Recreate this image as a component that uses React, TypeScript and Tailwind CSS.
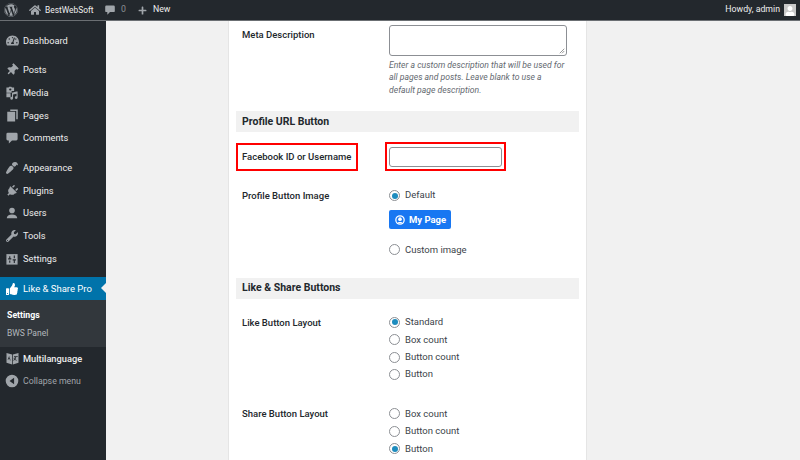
import type { ReactNode } from "react";
import {
  FaWordpress,
  FaHome,
  FaPlus,
  FaTachometerAlt,
  FaThumbtack,
  FaPaintBrush,
  FaPlug,
  FaUser,
  FaWrench,
  FaThumbsUp,
} from "react-icons/fa";

function CommentIcon({ className }: { className: string }) {
  return (
    <svg viewBox="0 0 20 20" className={className} fill="currentColor">
      <path d="M4 2.500h12a2 2 0 0 1 2 2v7a2 2 0 0 1-2 2h-6l-4.500 4.500v-4.500H4a2 2 0 0 1-2-2v-7a2 2 0 0 1 2-2z" />
    </svg>
  );
}

function PagesIcon() {
  return (
    <svg viewBox="0 0 20 20" className="h-[15px] w-[15px]" fill="currentColor">
      <path d="M7 2h10v13h-2V4H7z" />
      <path d="M3 5h10.500v13H3z" />
    </svg>
  );
}

function UsersIcon() {
  return (
    <svg viewBox="0 0 20 20" className="h-[14px] w-[14px]" fill="currentColor">
      <circle cx="10" cy="6.500" r="4" />
      <path d="M2.500 17.500c0-3.500 3-5.500 7.500-5.500s7.500 2 7.500 5.500z" />
    </svg>
  );
}

function MediaIcon() {
  return (
    <svg viewBox="0 0 20 20" className="h-[14px] w-[14px]" fill="currentColor">
      <path d="M2 2h3l1-1h3l1 1h3v5H9.500v2.500H2z" />
      <circle cx="7.500" cy="5" r="1.600" fill="#23282d" />
      <path d="M2 10.500h6V16H2zM16 8h2v8.500a2 2 0 1 1-1.500-1.900V11l-5 1.200v5.300a2 2 0 1 1-1.500-1.900V9.500z" />
    </svg>
  );
}

function SettingsIcon() {
  return (
    <svg viewBox="0 0 20 20" className="h-[14px] w-[14px]" fill="currentColor">
      <path d="M2 3h16v15H2z" />
      <path d="M6 6h1.600v3H9v1.600H4.500V9H6zM6 12h1.600v3.500H6zM12.500 5h1.600v4h-1.600zM11 10.500h4.600v1.600h-1.500v3.500h-1.600v-3.500H11z" fill="#23282d" />
    </svg>
  );
}

function LanguageIcon() {
  return (
    <svg viewBox="0 0 20 20" className="h-[15px] w-[15px]" fill="currentColor">
      <path d="M2 2.500 9.500 4.500V18L2 15.500zM10.500 4.500 18 2.500V15.500L10.500 18z" />
      <path d="M3.500 11.500 5.500 6.500l2 6-1-.3-.4-1.400-1.300-.3-.4 1.200zM5.100 9.700l.8.200-.4-1.500zM12 7h5v1h-2c-.2 1.200-.7 2.200-1.300 3 .6.400 1.200.7 2 1l-.4.900c-.8-.3-1.500-.7-2.200-1.200-.5.500-1 .9-1.600 1.200l-.5-.800c.6-.3 1-.6 1.400-1-.4-.5-.8-1.100-1-1.700l.9-.300c.2.400.4.800.7 1.200.4-.6.700-1.300.9-2.100H12z" fill="#23282d" />
    </svg>
  );
}

function CollapseIcon() {
  return (
    <svg viewBox="0 0 20 20" className="h-[14px] w-[14px]" fill="currentColor">
      <path fillRule="evenodd" d="M10 1a9 9 0 1 1 0 18 9 9 0 0 1 0-18zm3 4.500L6.500 10l6.500 4.500z" />
    </svg>
  );
}

function MenuItem({ icon, label, bold }: { icon: ReactNode; label: string; bold?: boolean }) {
  return (
    <div className="flex h-[22.6px] items-center">
      <span className="flex w-[23px] shrink-0 justify-center pl-[1px] text-[#a0a5aa]">{icon}</span>
      <span className={`text-[9.25px] text-[#eeeeee] ${bold ? "font-medium" : ""}`}>{label}</span>
    </div>
  );
}

function Radio({ checked, label }: { checked?: boolean; label: string }) {
  return (
    <div className="flex h-[17.4px] items-center">
      <span className="flex h-[11px] w-[11px] items-center justify-center rounded-full border border-[#8c8f94] bg-white">
        {checked && <span className="h-[6px] w-[6px] rounded-full bg-[#1e8cbe]" />}
      </span>
      <span className="ml-[5px] text-[9.5px] text-[#3c434a]">{label}</span>
    </div>
  );
}

function Heading({ children }: { children: ReactNode }) {
  return (
    <div className="flex h-[21px] items-center bg-[#f1f1f1] px-[6px] text-[10.5px] font-bold text-[#23282d]">
      {children}
    </div>
  );
}

function Label({ children }: { children: ReactNode }) {
  return <div className="w-[153px] shrink-0 pl-[6px] text-[9.5px] font-medium text-[#23282d]">{children}</div>;
}

export default function App() {
  return (
    <div className="flex h-[460px] w-[800px] flex-col overflow-hidden bg-[#f1f1f1] font-['Roboto',sans-serif]">
      <header className="flex h-[20px] shrink-0 items-center justify-between bg-[#23282d] text-[8.75px] text-[#eeeeee]">
        <div className="flex items-center">
          <FaWordpress className="ml-[4px] h-[14px] w-[14px] text-[#a0a5aa]" />
          <FaHome className="ml-[11px] h-[12px] w-[12px] text-[#a0a5aa]" />
          <span className="ml-[4px] w-[49px] text-[8.4px]">BestWebSoft</span>
          <CommentIcon className="ml-[10px] h-[12px] w-[12px] text-[#a0a5aa]" />
          <span className="ml-[5px] text-[#8c8f94]">0</span>
          <FaPlus className="ml-[12px] h-[9px] w-[9px] text-[#a0a5aa]" />
          <span className="ml-[6px]">New</span>
        </div>
        <div className="flex items-center">
          <span>Howdy, admin</span>
          <span className="mr-[4px] ml-[4px] flex h-[12px] w-[12px] items-end justify-center overflow-hidden bg-[#c8c8c8]">
            <FaUser className="h-[10px] w-[10px] text-white" />
          </span>
        </div>
      </header>
      <div className="h-px shrink-0 bg-[#6b6f73]" />
      <div className="flex min-h-0 flex-1">
        <aside className="w-[106px] shrink-0 bg-[#23282d] pt-[8.500px]">
          <MenuItem icon={<FaTachometerAlt className="h-[13px] w-[13px]" />} label="Dashboard" />
          <div className="mt-[7px]">
            <MenuItem icon={<FaThumbtack className="h-[12px] w-[12px] rotate-45" />} label="Posts" />
            <MenuItem icon={<MediaIcon />} label="Media" />
            <MenuItem icon={<PagesIcon />} label="Pages" />
            <MenuItem icon={<CommentIcon className="h-[14px] w-[14px]" />} label="Comments" />
          </div>
          <div className="mt-[7.400px]">
            <MenuItem icon={<FaPaintBrush className="h-[12px] w-[12px] rotate-180" />} label="Appearance" />
            <MenuItem icon={<FaPlug className="h-[12px] w-[12px] rotate-45" />} label="Plugins" />
            <MenuItem icon={<UsersIcon />} label="Users" />
            <MenuItem icon={<FaWrench className="h-[12px] w-[12px]" />} label="Tools" />
            <MenuItem icon={<SettingsIcon />} label="Settings" />
          </div>
          <div className="relative mt-[7.400px] flex h-[23px] items-center bg-[#0073aa]">
            <span className="flex w-[23px] shrink-0 justify-center pl-[1px] text-white">
              <FaThumbsUp className="h-[12px] w-[12px]" />
            </span>
            <span className="text-[9.5px] text-white">Like &amp; Share Pro</span>
            <span className="absolute top-[6px] right-0 h-0 w-0 border-y-[5.500px] border-r-[5.500px] border-y-transparent border-r-[#f1f1f1]" />
          </div>
          <div className="flex h-[47px] flex-col bg-[#32373c] pt-[6px] pl-[7px]">
            <div className="flex h-[18px] items-center text-[8.75px] font-bold text-white">Settings</div>
            <div className="flex h-[19px] items-center text-[8.5px] text-[#b4b9be]">BWS Panel</div>
          </div>
          <MenuItem icon={<LanguageIcon />} label="Multilanguage" bold />
          <div className="flex h-[23px] items-center">
            <span className="flex w-[23px] shrink-0 justify-center pl-[1px] text-[#a0a5aa]">
              <CollapseIcon />
            </span>
            <span className="text-[8.75px] text-[#a0a5aa]">Collapse menu</span>
          </div>
        </aside>
        <main className="min-w-0 flex-1 pl-[122px]">
          <div className="h-[460px] w-[359px] border-x border-[#e5e5e5] bg-white px-[7px]">
            <div className="flex pt-[4px]">
              <Label>
                <div className="mt-[3px]">Meta Description</div>
              </Label>
              <div className="w-[185px]">
                <div className="relative h-[31px] w-[178px] rounded-[3px] border border-[#8c8f94] bg-white">
                  <svg viewBox="0 0 8 8" className="absolute right-[1px] bottom-[1px] h-[6px] w-[6px]" stroke="#777" fill="none">
                    <path d="M1 7 7 1M4 7l3-3" />
                  </svg>
                </div>
                <p className="mt-[3px] text-[8.65px] leading-[12.300px] text-[#646970] italic">
                  Enter a custom description that will be used for
                  <br />
                  all pages and posts. Leave blank to use a
                  <br />
                  default page description.
                </p>
              </div>
            </div>
            <div className="mt-[15px]">
              <Heading>Profile URL Button</Heading>
            </div>
            <div className="relative mt-[15px] flex items-center">
              <Label>Facebook ID or Username</Label>
              <div className="h-[20px] w-[113px] rounded-[3px] border border-[#8c8f94] bg-white" />
              <div className="absolute top-[-4px] left-0 h-[28px] w-[122px] border-2 border-[#ff0000]" />
              <div className="absolute top-[-5px] left-[149px] h-[29px] w-[121px] border-2 border-[#ff0000]" />
            </div>
            <div className="mt-[20px] flex">
              <Label>
                <div className="mt-[2px]">Profile Button Image</div>
              </Label>
              <div>
                <Radio checked label="Default" />
                <div className="mt-[6px] flex h-[19px] w-[62px] items-center rounded-[2px] bg-[#1877f2] pl-[6px] text-[9.5px] font-bold text-white">
                  <svg viewBox="0 0 12 12" className="mr-[4px] h-[10px] w-[10px]">
                    <circle cx="6" cy="6" r="5" fill="none" stroke="white" strokeWidth="1.500" />
                    <circle cx="6" cy="5" r="2.200" fill="white" />
                    <path d="M2.500 10c1-2 6-2 7 0" fill="white" />
                  </svg>
                  My Page
                </div>
                <div className="mt-[12px]">
                  <Radio label="Custom image" />
                </div>
              </div>
            </div>
            <div className="mt-[19px]">
              <Heading>Like &amp; Share Buttons</Heading>
            </div>
            <div className="mt-[15px] flex">
              <Label>
                <div className="mt-[2px]">Like Button Layout</div>
              </Label>
              <div>
                <Radio checked label="Standard" />
                <Radio label="Box count" />
                <Radio label="Button count" />
                <Radio label="Button" />
              </div>
            </div>
            <div className="mt-[22px] flex">
              <Label>
                <div className="mt-[2px]">Share Button Layout</div>
              </Label>
              <div>
                <Radio label="Box count" />
                <Radio label="Button count" />
                <Radio checked label="Button" />
              </div>
            </div>
          </div>
        </main>
      </div>
    </div>
  );
}
